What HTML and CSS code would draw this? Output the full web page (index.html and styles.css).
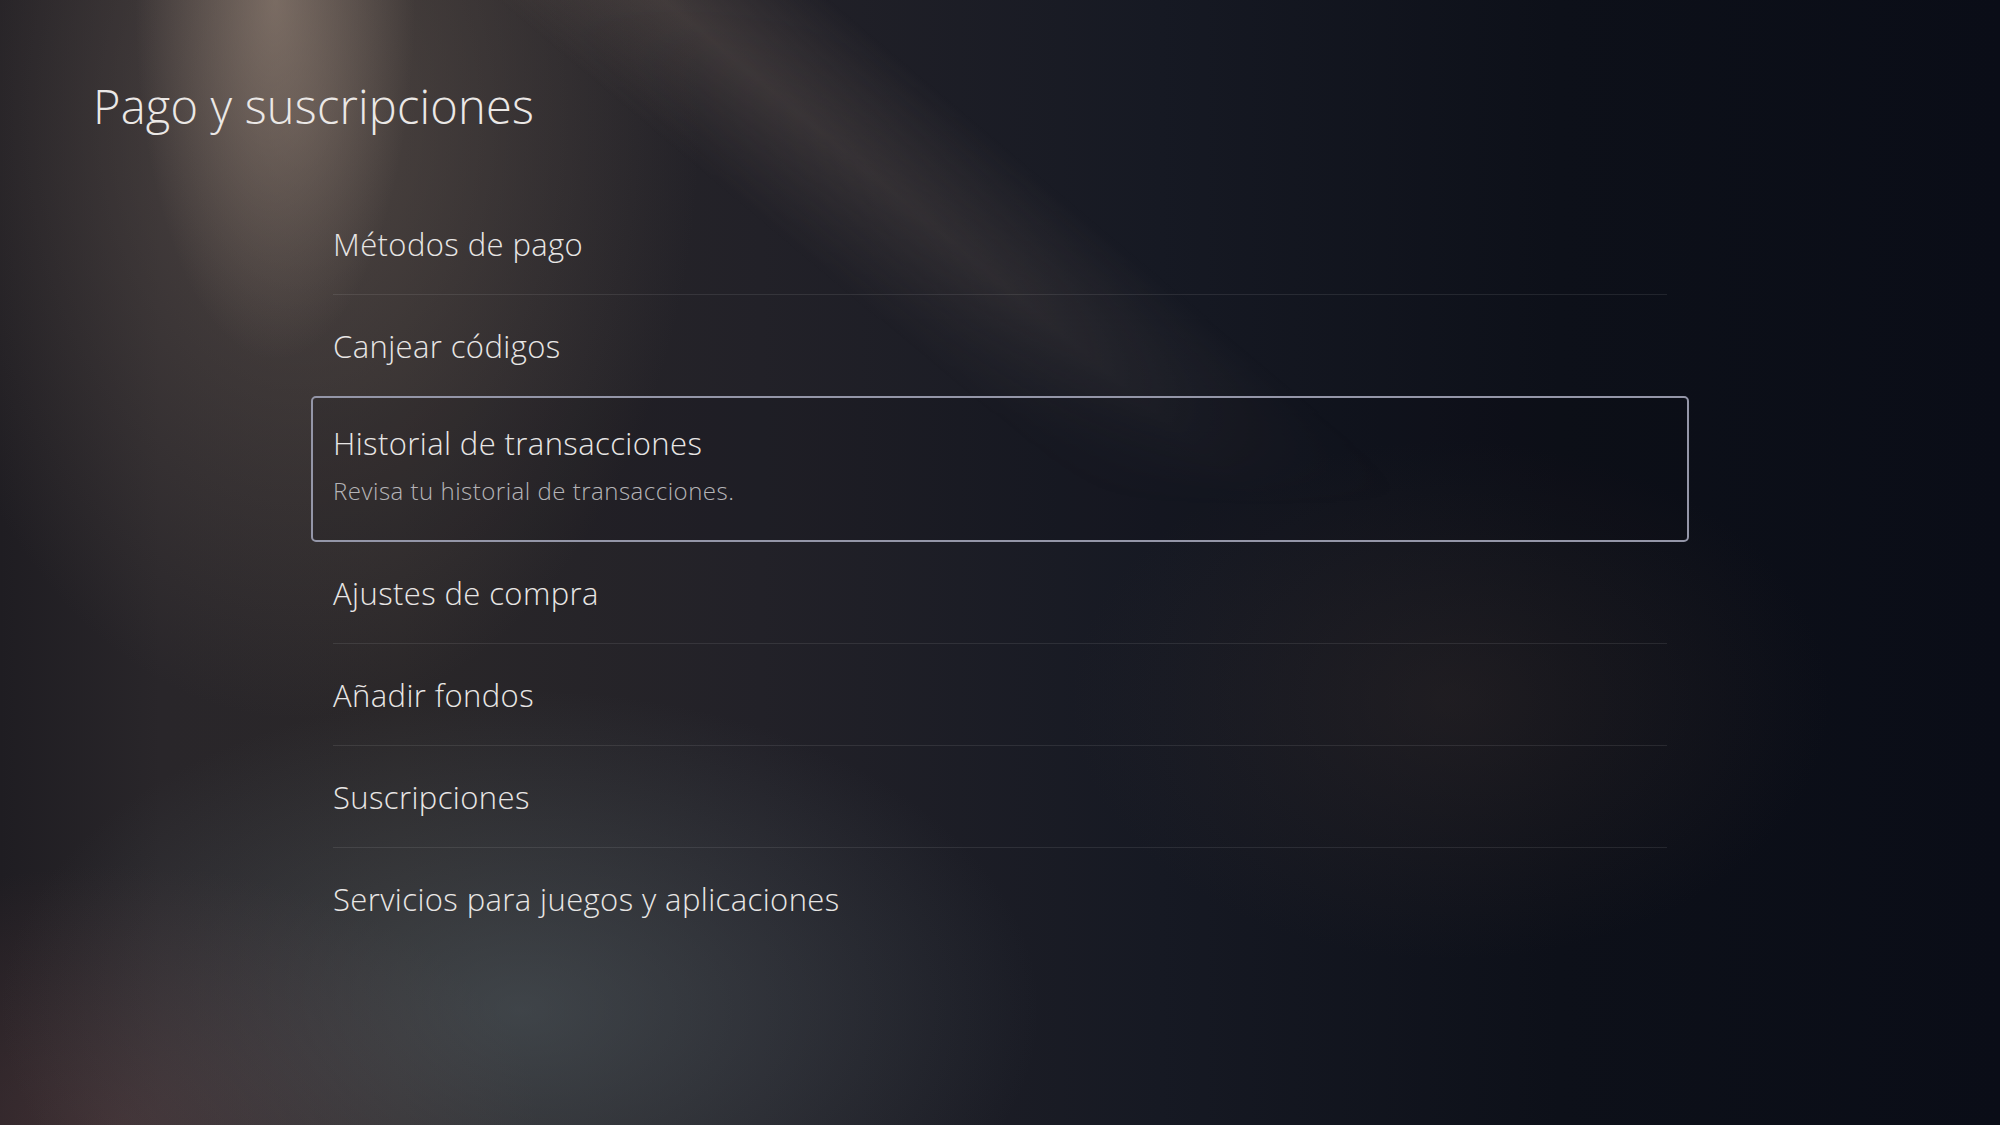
FILE: index.html
```html
<!DOCTYPE html>
<html lang="es">
<head>
    <meta charset="UTF-8">
    <meta name="viewport" content="width=device-width, initial-scale=1.0">
    <title>Pago y suscripciones</title>
    <link rel="stylesheet" href="styles.css">
</head>
<body>
    <main class="screen">
        <h1 class="page-title">Pago y suscripciones</h1>

        <!-- Settings list, the focused row gets the outline -->
        <ul class="menu">
            <li class="menu-item">
                <div class="item-body"><span class="item-label">Métodos de pago</span></div>
            </li>
            <li class="menu-item no-rule">
                <div class="item-body"><span class="item-label">Canjear códigos</span></div>
            </li>
            <li class="menu-item selected">
                <div class="item-body">
                    <span class="item-label">Historial de transacciones</span>
                    <span class="item-desc">Revisa tu historial de transacciones.</span>
                </div>
            </li>
            <li class="menu-item">
                <div class="item-body"><span class="item-label">Ajustes de compra</span></div>
            </li>
            <li class="menu-item">
                <div class="item-body"><span class="item-label">Añadir fondos</span></div>
            </li>
            <li class="menu-item">
                <div class="item-body"><span class="item-label">Suscripciones</span></div>
            </li>
            <li class="menu-item no-rule">
                <div class="item-body"><span class="item-label">Servicios para juegos y aplicaciones</span></div>
            </li>
        </ul>
    </main>
</body>
</html>
```

FILE: styles.css
```css
body {
    margin: 0;
    width: 2000px;
    height: 1125px;
    overflow: hidden;
    position: relative;
    font-family: "Open Sans", "Noto Sans", sans-serif;
    color: #e8e6e5;
    background-color: #10131c;
    background-image:
        radial-gradient(ellipse 140px 360px at 275px 0px, rgba(165, 145, 130, 0.55), rgba(165, 145, 130, 0) 100%),
        radial-gradient(ellipse 400px 600px at 300px 120px, rgba(112, 98, 90, 0.5), rgba(112, 98, 90, 0) 100%),
        radial-gradient(ellipse 520px 320px at 520px 1010px, rgba(92, 106, 112, 0.45), rgba(92, 106, 112, 0) 100%),
        radial-gradient(ellipse 420px 260px at 120px 1125px, rgba(98, 66, 68, 0.45), rgba(98, 66, 68, 0) 100%),
        radial-gradient(ellipse 380px 260px at 1450px 700px, rgba(60, 48, 44, 0.35), rgba(60, 48, 44, 0) 100%),
        linear-gradient(90deg, #1f1d22 0%, #29262a 8%, #2a2729 20%, #222128 38%, #161923 58%, #0d1019 78%, #0a0d17 100%);
}

/* soft diagonal light streak at the top */
body::before {
    content: "";
    position: absolute;
    inset: 0;
    pointer-events: none;
    background: linear-gradient(40deg, rgba(130, 112, 100, 0) 55%, rgba(130, 112, 100, 0.3) 60%, rgba(130, 112, 100, 0) 65%);
    -webkit-mask-image: linear-gradient(to bottom, #000 0%, rgba(0, 0, 0, 0.6) 25%, transparent 45%);
    mask-image: linear-gradient(to bottom, #000 0%, rgba(0, 0, 0, 0.6) 25%, transparent 45%);
}

.screen {
    position: relative;
    z-index: 1;
}

.page-title {
    margin: 0;
    padding: 77px 0 0 93px;
    font-size: 47px;
    font-weight: 300;
    line-height: 58px;
    letter-spacing: 0.2px;
    color: #ebe8e6;
}

.menu {
    list-style: none;
    margin: 58px 0 0 311px;
    padding: 0;
    width: 1378px;
}

.menu-item {
    padding: 0 22px;
}

.item-body {
    height: 101px;
    border-bottom: 1px solid rgba(255, 255, 255, 0.09);
    display: flex;
    flex-direction: column;
    justify-content: center;
}

.item-label {
    font-size: 31px;
    font-weight: 300;
    line-height: 40px;
    letter-spacing: 0.4px;
}

.item-desc {
    margin-top: 12px;
    font-size: 24px;
    font-weight: 300;
    line-height: 32px;
    letter-spacing: 0.5px;
    color: #b5b4b7;
}

.menu-item.no-rule .item-body {
    border-bottom: none;
}

.menu-item.selected {
    padding: 0 20px;
    border: 2px solid #9496a8;
    border-radius: 5px;
    background-color: rgba(8, 10, 18, 0.12);
}

.menu-item.selected .item-body {
    height: 142px;
    border-bottom: none;
    justify-content: flex-start;
    padding-top: 25px;
    box-sizing: border-box;
}
```
